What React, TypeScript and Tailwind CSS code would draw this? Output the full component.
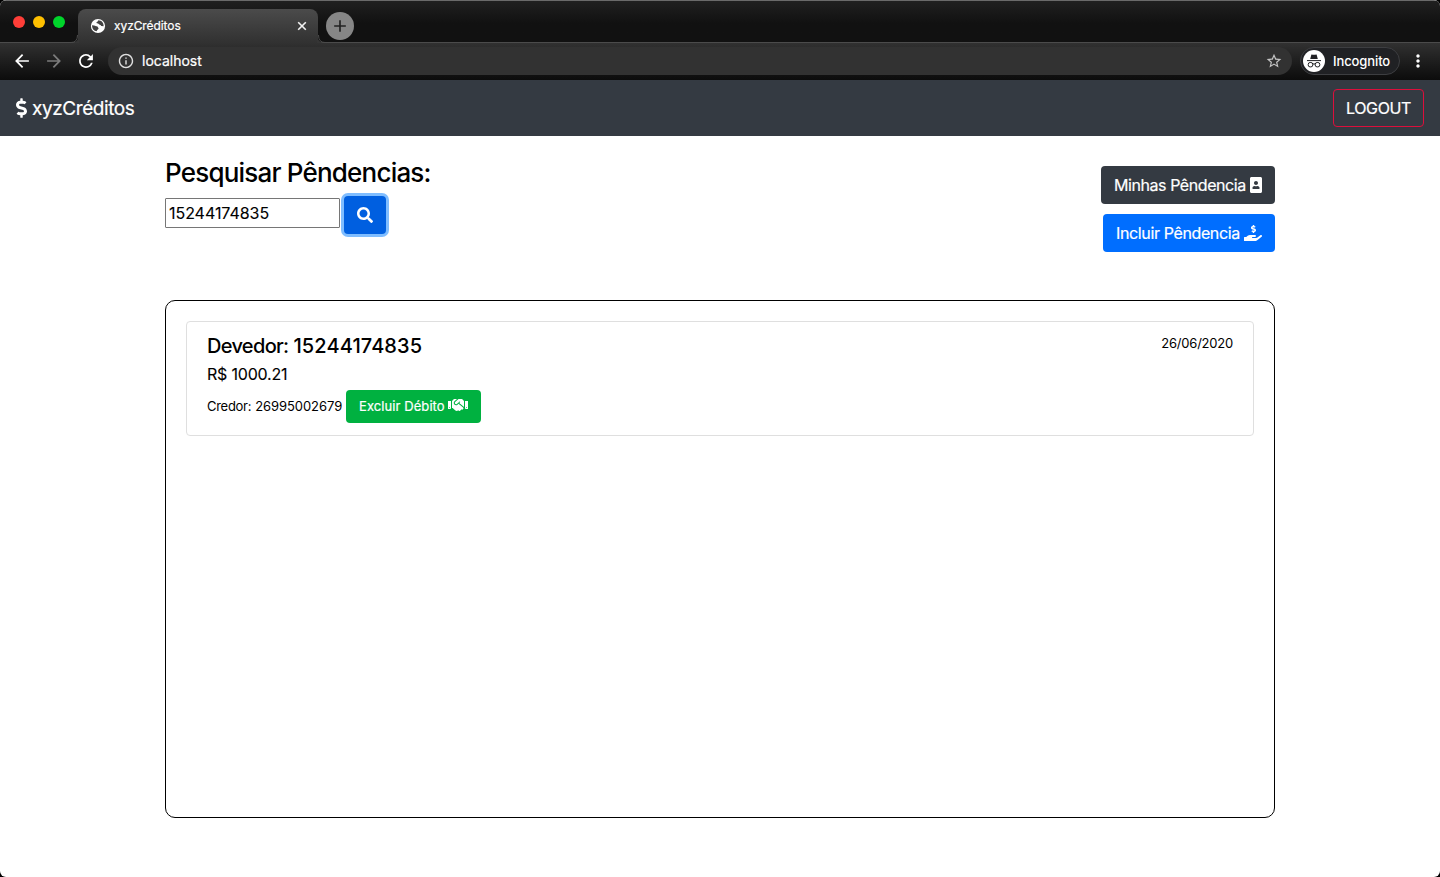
import React, { useState } from "react";
import { FaDollarSign, FaSearch, FaPortrait, FaHandHoldingUsd, FaHandshake } from "react-icons/fa";
import {
  MdArrowBack,
  MdArrowForward,
  MdRefresh,
  MdInfoOutline,
  MdStarBorder,
  MdMoreVert,
  MdAdd,
} from "react-icons/md";

function GlobeIcon() {
  return (
    <svg viewBox="0 0 16 16" className="h-4 w-4 shrink-0">
      <circle cx="8" cy="8" r="7.1" fill="#fff" />
      <path
        d="M2.1 7.2C4.6 7 5.4 8.2 7 8.3c1.2.3.7 1.600 1.600 1.800 0 1.500-1.600 1.600-1.900 3.200-2.800-.4-4.800-2.800-4.600-6.100z"
        fill="#434343"
      />
      <path
        d="M8.300 2.200c-.2 1.600-1.900 1.300-2 2.800 1.300.5 2.100.2 2.700 1.300.9.9 1.800.6 2.200 1.600l2.400.4C13.900 5 11.600 2.200 8.300 2.200z"
        fill="#434343"
      />
    </svg>
  );
}

function IncognitoIcon() {
  return (
    <svg viewBox="0 0 22 22" className="h-[22px] w-[22px] shrink-0">
      <circle cx="11" cy="11" r="11" fill="#fff" />
      <path d="M8.4 4.4 10 4.8h2l1.6-.4L14.8 9H7.2z" fill="#202124" />
      <path d="M4 10.6h14" stroke="#202124" strokeWidth="1" />
      <g fill="none" stroke="#202124" strokeWidth="1">
        <rect x="5.2" y="12.5" width="4.6" height="4.4" rx="1.9" />
        <rect x="12.2" y="12.5" width="4.6" height="4.4" rx="1.9" />
        <path d="M9.7 14.2q1.3-.8 2.6 0" />
      </g>
    </svg>
  );
}

function TabStrip() {
  return (
    <div className="flex h-[43px] items-end border-t border-b border-t-[#6a6a6a] border-b-[#4b4b4b] bg-linear-to-b from-[#202020] to-[#111111] to-55%">
      <div className="flex w-[78px] gap-2 self-start pt-[15px] pl-[13px]">
        <span className="h-3 w-3 rounded-full bg-[#ff3e38]" />
        <span className="h-3 w-3 rounded-full bg-[#ffc000]" />
        <span className="h-3 w-3 rounded-full bg-[#00d52b]" />
      </div>
      <div className="relative -mb-px flex h-[34px] w-60 items-center rounded-t-lg bg-linear-to-b from-[#4b4b4b] to-[#313131] pr-[10px] pl-3 text-white">
        <svg className="absolute bottom-0 -left-[7px] h-2 w-2" viewBox="0 0 8 8">
          <path d="M8 0v8H0Q7.500 8 7.500 0" fill="#353535" />
          <path d="M0 7.5Q6.500 7.500 6.500 0" fill="none" stroke="#4b4b4b" />
        </svg>
        <svg className="absolute -right-[7px] bottom-0 h-2 w-2" viewBox="0 0 8 8">
          <path d="M0 0v8h8Q.5 8 .5 0" fill="#353535" />
          <path d="M8 7.5Q1.500 7.500 1.500 0" fill="none" stroke="#4b4b4b" />
        </svg>
        <GlobeIcon />
        <span className="ml-2 text-xs tracking-[-0.08px] [-webkit-text-stroke:0.2px]">xyzCréditos</span>
        <svg viewBox="0 0 12 12" className="ml-auto h-3 w-3">
          <path d="M2.200 2.200l7.600 7.600M9.800 2.200l-7.600 7.600" stroke="#f2f2f2" strokeWidth="1.600" />
        </svg>
      </div>
      <div className="mb-[2px] ml-2 flex h-7 w-7 items-center justify-center rounded-full bg-[#868686] text-[#222]">
        <MdAdd className="h-5 w-5" />
      </div>
    </div>
  );
}

function Toolbar() {
  return (
    <div className="flex h-[37px] items-center bg-linear-to-b from-[#313131] to-[#0c0c0c] pb-[2px] pl-[13px] text-white">
      <MdArrowBack className="h-[18px] w-[18px] scale-115" />
      <MdArrowForward className="ml-[14px] h-[18px] w-[18px] scale-115 text-[#7c7c7c]" />
      <MdRefresh className="ml-[14px] h-[18px] w-[18px] scale-115" />
      <div className="ml-[13px] flex h-7 w-[1184px] items-center rounded-full bg-[#323232] pr-[10px] pl-[10px]">
        <MdInfoOutline className="h-4 w-4 scale-108 text-[#dedede]" />
        <span className="ml-2 text-sm [-webkit-text-stroke:0.2px]">localhost</span>
        <MdStarBorder className="ml-auto h-4 w-4 scale-110 text-[#c4c4c4]" />
      </div>
      <div className="ml-2 flex h-7 w-[100px] items-center rounded-full border border-[#3d3e41] bg-[#202124] pl-[2px]">
        <IncognitoIcon />
        <span className="ml-2 pt-[2px] text-[13px] font-medium tracking-[-0.1px]">Incognito</span>
      </div>
      <MdMoreVert className="ml-2 h-5 w-5" />
    </div>
  );
}

function NavBar() {
  return (
    <nav className="flex h-14 items-center justify-between bg-[#343a42] px-4 text-white">
      <div className="flex items-center">
        <FaDollarSign className="h-5 w-[11px]" />
        <span className="ml-[5px] pt-px text-[19px] leading-7 tracking-[-0.42px] [-webkit-text-stroke:0.2px]">
          xyzCréditos
        </span>
      </div>
      <button className="h-[38px] w-[91px] rounded border border-[#dc0f3c] text-base tracking-[-0.35px] [-webkit-text-stroke:0.2px]">
        LOGOUT
      </button>
    </nav>
  );
}

function SearchSection() {
  const [query, setQuery] = useState("15244174835");
  return (
    <section className="flex justify-between">
      <div className="pt-5">
        <h3 className="text-[26px] leading-[33px] font-medium tracking-[-0.8px] whitespace-nowrap">
          Pesquisar Pêndencias:
        </h3>
        <div className="mt-[7px] flex items-start">
          <input
            value={query}
            onChange={(event) => setQuery(event.target.value)}
            className="mt-[2px] h-[30px] w-[175px] rounded-[1px] border border-[#767676] px-[3px] text-base tracking-[-0.04px] outline-none [-webkit-text-stroke:0.1px]"
          />
          <button className="ml-1 flex h-[38px] w-[42px] items-center justify-center rounded bg-[#005fe0] text-white ring-3 ring-[#7fbdff]">
            <FaSearch className="h-4 w-4" />
          </button>
        </div>
      </div>
      <div className="flex flex-col items-end gap-[10px] pt-[30px] text-white">
        <button className="flex h-[38px] w-[174px] items-center justify-between rounded bg-[#343a42] px-[13px]">
          <span className="tracking-[-0.43px] whitespace-nowrap [-webkit-text-stroke:0.2px]">Minhas Pêndencia</span>
          <FaPortrait className="h-4 w-3" />
        </button>
        <button className="flex h-[38px] w-[172px] items-center justify-between rounded bg-[#006eff] px-[13px]">
          <span className="tracking-[-0.37px] whitespace-nowrap [-webkit-text-stroke:0.2px]">Incluir Pêndencia</span>
          <FaHandHoldingUsd className="h-4 w-[18px]" />
        </button>
      </div>
    </section>
  );
}

function DebtCard() {
  return (
    <article className="flex h-[115px] justify-between rounded border border-[#dfdfdf] px-5 pt-3">
      <div>
        <h5 className="flex gap-[5px] text-xl leading-6 font-medium">
          <span className="tracking-[-0.68px]">Devedor:</span>
          <span className="tracking-[0.1px]">15244174835</span>
        </h5>
        <p className="mt-1 leading-6 tracking-[-0.2px] [-webkit-text-stroke:0.1px]">R$ 1000.21</p>
        <div className="mt-1 flex items-center">
          <span className="flex w-[135px] gap-1 text-[13px] whitespace-nowrap">
            <span className="tracking-[-0.28px]">Credor:</span>
            <span className="tracking-[-0.07px]">26995002679</span>
          </span>
          <button className="ml-1 flex h-[33px] w-[135px] items-center justify-between rounded bg-[#00b140] px-[13px] text-white">
            <span className="text-[13px] tracking-[0.08px] whitespace-nowrap [-webkit-text-stroke:0.2px]">
              Excluir Débito
            </span>
            <FaHandshake className="mb-[3px] h-4 w-5" />
          </button>
        </div>
      </div>
      <time className="text-[13px] leading-[18px] tracking-[-0.22px]">26/06/2020</time>
    </article>
  );
}

export default function App() {
  return (
    <div className="h-[877px] w-[1440px] bg-black font-['Inter',sans-serif]">
      <div className="flex h-full flex-col overflow-hidden rounded-[6px] bg-white text-black">
        <TabStrip />
        <Toolbar />
        <NavBar />
        <main className="mx-auto flex w-[1110px] flex-1 flex-col">
          <SearchSection />
          <section className="mt-12 h-[518px] rounded-[10px] border border-black p-5">
            <DebtCard />
          </section>
        </main>
      </div>
    </div>
  );
}
